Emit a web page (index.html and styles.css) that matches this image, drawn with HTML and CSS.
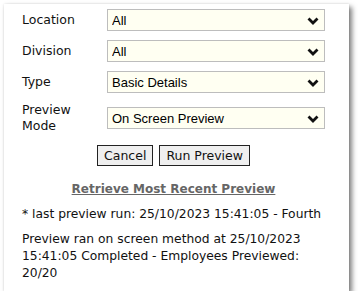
FILE: index.html
```html
<!DOCTYPE html>
<html>
<head>
<meta charset="utf-8">
<link rel="stylesheet" href="styles.css">
</head>
<body>
<div class="panel">
  <div class="form">
    <label class="lbl">Location</label>
    <span class="sel"><select><option>All</option></select><svg class="chev" width="12" height="8" viewBox="0 0 12 8"><path d="M1.5 1.5 L6 6 L10.5 1.5" fill="none" stroke="#111" stroke-width="2.8"/></svg></span>
    <label class="lbl">Division</label>
    <span class="sel"><select><option>All</option></select><svg class="chev" width="12" height="8" viewBox="0 0 12 8"><path d="M1.5 1.5 L6 6 L10.5 1.5" fill="none" stroke="#111" stroke-width="2.8"/></svg></span>
    <label class="lbl">Type</label>
    <span class="sel"><select><option>Basic Details</option></select><svg class="chev" width="12" height="8" viewBox="0 0 12 8"><path d="M1.5 1.5 L6 6 L10.5 1.5" fill="none" stroke="#111" stroke-width="2.8"/></svg></span>
    <label class="lbl">Preview<br>Mode</label>
    <span class="sel"><select><option>On Screen Preview</option></select><svg class="chev" width="12" height="8" viewBox="0 0 12 8"><path d="M1.5 1.5 L6 6 L10.5 1.5" fill="none" stroke="#111" stroke-width="2.8"/></svg></span>
  </div>
  <div class="buttons">
    <button class="btn">Cancel</button>
    <button class="btn">Run Preview</button>
  </div>
  <div class="linkrow"><a class="link" href="#">Retrieve Most Recent Preview</a></div>
  <p class="txt">* last preview run: 25/10/2023 15:41:05 - Fourth</p>
  <p class="txt status">Preview ran on screen method at 25/10/2023 15:41:05 Completed - Employees Previewed: 20/20</p>
</div>
</body>
</html>
```
FILE: styles.css
```css
html, body {
  margin: 0;
  padding: 0;
  background: #ffffff;
}
body {
  font-family: "DejaVu Sans", Verdana, sans-serif;
  color: #111;
}
.panel {
  box-sizing: border-box;
  margin: 4px 0 0 4px;
  width: 345px;
  height: 287px;
  background: #fff;
  padding: 5px 24px 0 18px;
  box-shadow: 3px 3px 5px rgba(0,0,0,0.5), 0 0 2px rgba(0,0,0,0.12);
}
.form {
  display: grid;
  grid-template-columns: 85px 218px;
  row-gap: 9px;
  align-items: center;
}
.lbl {
  font-size: 12.5px;
  line-height: 16px;
}
.sel {
  position: relative;
  display: block;
  height: 22px;
}
.sel select {
  -webkit-appearance: none;
  appearance: none;
  box-sizing: border-box;
  width: 218px;
  height: 22px;
  margin: 0;
  border: 1px solid #bdbdbd;
  border-radius: 0;
  background: #fffff2;
  font-family: "Liberation Sans", Arial, sans-serif;
  font-size: 13px;
  color: #000;
  padding: 0 20px 0 4px;
}
.chev {
  position: absolute;
  right: 6px;
  top: 8px;
  pointer-events: none;
}
.buttons {
  display: flex;
  justify-content: center;
  gap: 6px;
  margin-top: 11px;
}
.btn {
  box-sizing: border-box;
  height: 21px;
  padding: 0 6px;
  margin: 0;
  border: 1px solid #222;
  border-radius: 0;
  background: #efefef;
  font-family: "DejaVu Sans", Verdana, sans-serif;
  font-size: 12.5px;
  color: #111;
}
.linkrow {
  text-align: center;
  margin-top: 14px;
  line-height: 16px;
}
.link {
  font-family: "DejaVu Sans", Verdana, sans-serif;
  font-weight: bold;
  font-size: 12px;
  color: #666;
  text-decoration: underline;
}
.txt {
  margin: 9px 0 0 0;
  font-size: 12.3px;
  line-height: 17px;
}
.status {
  margin-top: 8px;
}
```
